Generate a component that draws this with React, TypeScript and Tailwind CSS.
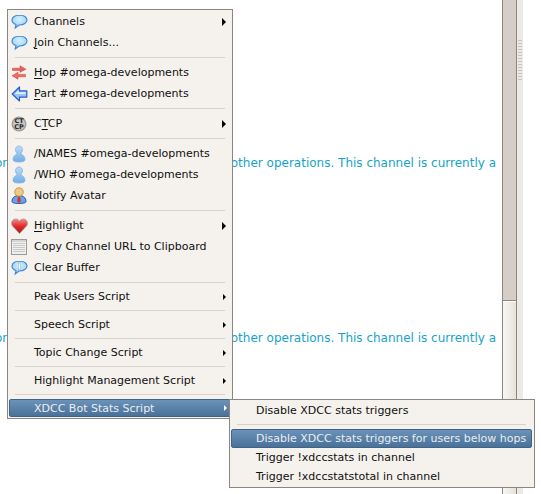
import React from "react";

const Bubble = ({ info }: { info?: boolean }) => (
  <svg width="17" height="15" viewBox="0 0 17 15">
    <defs>
      <radialGradient id="bub" cx="0.5" cy="0.35" r="0.7">
        <stop offset="0" stopColor="#d9effd" />
        <stop offset="0.65" stopColor="#a6d9f8" />
        <stop offset="1" stopColor="#5aa9e6" />
      </radialGradient>
    </defs>
    <path d="M8.500 1C4.200 1 1 3.200 1 6c0 2 1.600 3.700 4 4.500L4.200 14l3.900-3h.4c4.300 0 7.500-2.200 7.500-5S12.800 1 8.500 1z" fill="url(#bub)" stroke="#3d86d6" strokeWidth="1.100" />
    {info && <rect x="7.500" y="3" width="2.200" height="6.500" fill="#fafafa" stroke="#90a4b8" strokeWidth="0.500" />}
  </svg>
);

const Hop = () => (
  <svg width="16" height="15" viewBox="0 0 16 15">
    <path d="M1.500 3.200H9V.8l6 3.400-6 3V5.400H1.500z" fill="#e9615a" stroke="#cf3f38" strokeWidth="0.500" />
    <path d="M14.500 9.400H7V7.200L1 10.800l6 3.400v-2.400h7.500z" fill="#f06a62" stroke="#cf3f38" strokeWidth="0.500" />
  </svg>
);

const Part = () => (
  <svg width="17" height="16" viewBox="0 0 17 16">
    <path d="M1.200 8L8.500 1V4.800H15.800V11.200H8.500V15z" fill="#96c4f4" stroke="#2a5fd0" strokeWidth="1.200" strokeLinejoin="round" />
    <path d="M3.800 8L7.700 4.200V6.200H14.500V8z" fill="#e3f0fd" />
  </svg>
);

const Ctcp = () => (
  <svg width="16" height="16" viewBox="0 0 16 16">
    <circle cx="8" cy="8" r="7.500" fill="#9e9e9b" />
    <circle cx="8" cy="8" r="6" fill="#c6c6c2" />
    <text x="8" y="7.300" textAnchor="middle" fontSize="6.500" fontWeight="700" fontFamily="'DejaVu Sans', sans-serif" fill="#2a2a2a">CT</text>
    <text x="8" y="13.300" textAnchor="middle" fontSize="6.500" fontWeight="700" fontFamily="'DejaVu Sans', sans-serif" fill="#2a2a2a">CP</text>
  </svg>
);

const Person = () => (
  <svg width="14" height="18" viewBox="0 0 14 18">
    <defs>
      <linearGradient id="per" x1="0" y1="0" x2="0" y2="1">
        <stop offset="0" stopColor="#bcdcf6" />
        <stop offset="1" stopColor="#6fade8" />
      </linearGradient>
    </defs>
    <path d="M7 1C4.800 1 3.500 2.600 3.500 4.700c0 1.500.6 2.700 1.500 3.300v1.200C2.600 10 1 11.800 1 14.500c0 1.800 2.400 2.500 6 2.500s6-.7 6-2.500c0-2.700-1.600-4.500-4-5.300V8c.9-.6 1.500-1.800 1.500-3.300C10.500 2.600 9.200 1 7 1z" fill="url(#per)" stroke="#7fa9d6" strokeWidth="0.700" />
  </svg>
);

const Avatar = () => (
  <svg width="16" height="17" viewBox="0 0 16 17">
    <path d="M1 14.500c0-3.600 2.500-6 7-6s7 2.400 7 6c0 1.200-2 2-7 2s-7-.8-7-2z" fill="#6aa2e8" stroke="#1f4ea6" strokeWidth="0.900" />
    <path d="M7 9h2l.8 5.500L8 16l-1.800-1.500z" fill="#d9342f" />
    <ellipse cx="8" cy="5" rx="4.300" ry="4.200" fill="#f2c97e" stroke="#b98a3f" strokeWidth="0.800" />
  </svg>
);

const Heart = () => (
  <svg width="17" height="16" viewBox="0 0 17 16">
    <defs>
      <linearGradient id="hrt" x1="0" y1="0" x2="0" y2="1">
        <stop offset="0" stopColor="#f78a8a" />
        <stop offset="0.5" stopColor="#e42a2a" />
        <stop offset="1" stopColor="#b01616" />
      </linearGradient>
    </defs>
    <path d="M8.500 15.500L1.300 7.800C-.6 4.800 1.300 1 4.700 1c1.800 0 3 .9 3.800 2.200C9.300 1.900 10.500 1 12.300 1c3.400 0 5.300 3.800 3.400 6.800z" fill="url(#hrt)" stroke="#9a9a9a" strokeWidth="0.700" />
  </svg>
);

const Grid = () => (
  <svg width="16" height="16" viewBox="0 0 16 16">
    <rect x="0.500" y="0.500" width="15" height="15" fill="#f0f0ee" stroke="#9a9a97" />
    <rect x="1" y="1" width="14" height="2" fill="#d5d5d2" />
    {[4, 6, 8, 10, 12].map((y) =>
      [3, 5, 7, 9, 11, 13].map((x) => <rect key={`${x}-${y}`} x={x - 0.500} y={y} width="1" height="1" fill="#a3a3a0" />)
    )}
  </svg>
);

type Row =
  | { kind: "sep"; tall?: boolean }
  | {
      kind: "item";
      label: React.ReactNode;
      icon?: React.ReactNode;
      sub?: boolean;
      tall?: boolean;
      active?: boolean;
    };

const u = (s: string) => <span className="underline underline-offset-2">{s}</span>;

const rows: Row[] = [
  { kind: "item", tall: true, sub: true, icon: <Bubble />, label: "Channels" },
  { kind: "item", tall: true, icon: <Bubble />, label: <>{u("J")}oin Channels...</> },
  { kind: "sep" },
  { kind: "item", tall: true, icon: <Hop />, label: <>{u("H")}op #omega-developments</> },
  { kind: "item", tall: true, icon: <Part />, label: <>{u("P")}art #omega-developments</> },
  { kind: "sep" },
  { kind: "item", tall: true, sub: true, icon: <Ctcp />, label: <>C{u("T")}CP</> },
  { kind: "sep" },
  { kind: "item", tall: true, icon: <Person />, label: "/NAMES #omega-developments" },
  { kind: "item", tall: true, icon: <Person />, label: "/WHO #omega-developments" },
  { kind: "item", tall: true, icon: <Avatar />, label: "Notify Avatar" },
  { kind: "sep" },
  { kind: "item", tall: true, sub: true, icon: <Heart />, label: <>{u("H")}ighlight</> },
  { kind: "item", tall: true, icon: <Grid />, label: "Copy Channel URL to Clipboard" },
  { kind: "item", tall: true, icon: <Bubble info />, label: "Clear Buffer" },
  { kind: "sep" },
  { kind: "item", sub: true, label: "Peak Users Script" },
  { kind: "sep" },
  { kind: "item", sub: true, label: "Speech Script" },
  { kind: "sep" },
  { kind: "item", sub: true, label: "Topic Change Script" },
  { kind: "sep" },
  { kind: "item", sub: true, label: "Highlight Management Script" },
  { kind: "sep" },
  { kind: "item", sub: true, active: true, label: "XDCC Bot Stats Script" },
];

const Arrow = ({ light, big }: { light?: boolean; big?: boolean }) => (
  <span
    className={`ml-auto mr-[5px] h-0 w-0 ${
      big ? "border-y-[4px] border-l-[4px]" : "border-y-[3px] border-l-[3px]"
    } border-y-transparent ${light ? "border-l-white" : "border-l-black"}`}
  />
);

const activeRow =
  "rounded-[2px] border border-[#3f6488] bg-gradient-to-b from-[#6b93b9] to-[#4a7198] text-[#e8eef4]";

function TealLine({ top }: { top: string }) {
  return (
    <div className={`absolute left-[-5px] flex w-[507px] justify-between text-[12px] leading-[15px] text-[#16a3c7] ${top}`}>
      <span>on</span>
      <span className="pr-[6px]">other operations. This channel is currently a</span>
    </div>
  );
}

export default function App() {
  return (
    <div className="relative h-[494px] w-[541px] overflow-hidden bg-white font-['DejaVu_Sans',sans-serif] text-[11px] leading-none text-[#101010]">
      <TealLine top="top-[156px]" />
      <TealLine top="top-[331px]" />

      <div className="absolute right-0 top-0 flex h-full w-[39px]">
        <div className="flex h-full w-[15px] flex-col border-x border-[#8b8680]">
          <div className="h-[301px] border-b border-[#8b8680] bg-[#d6cec6]" />
          <div className="flex-1 border-t border-white bg-gradient-to-r from-[#f8f7f5] to-[#e6e2dc]" />
        </div>
        <div className="flex h-full w-[6px] flex-col items-center gap-[2px] bg-[#edeae5] pt-[40px]">
          {Array.from({ length: 14 }).map((_, i) => (
            <div key={i} className="h-px w-[4px] bg-[#c9c3bc]" />
          ))}
        </div>
      </div>

      <div className="absolute left-[7px] top-[9px] w-[226px] border border-[#8b8680] bg-[#f5f2ed] p-px">
        {rows.map((r, i) =>
          r.kind === "sep" ? (
            <div key={i} className="flex h-[9px] items-center px-[6px]">
              <div className="h-px w-full bg-[#d7d2cb]" />
            </div>
          ) : (
            <div
              key={i}
              className={`flex items-center ${r.active ? `h-[18px] ${activeRow} -mr-[2px]` : r.tall ? "h-[21px]" : "h-[19px]"}`}
            >
              <span className={`mr-[5px] flex shrink-0 items-center justify-center ${r.active ? "w-[19px]" : "w-[20px]"}`}>{r.icon}</span>
              <span className="whitespace-nowrap">{r.label}</span>
              {r.sub && <Arrow light={r.active} big={r.tall} />}
            </div>
          )
        )}
      </div>

      <div className="absolute left-[229px] top-[399px] w-[306px] border border-[#8b8680] bg-[#f5f2ed] p-px pr-[2px]">
        <div className="flex h-[19px] items-center pl-[25px]">Disable XDCC stats triggers</div>
        <div className="flex h-[9px] items-center px-[6px]">
          <div className="h-px w-full bg-[#d7d2cb]" />
        </div>
        <div className={`flex h-[19px] items-center whitespace-nowrap pl-[24px] ${activeRow}`}>
          Disable XDCC stats triggers for users below hops
        </div>
        <div className="flex h-[19px] items-center pl-[25px]">Trigger !xdccstats in channel</div>
        <div className="flex h-[19px] items-center pl-[25px]">Trigger !xdccstatstotal in channel</div>
      </div>
    </div>
  );
}
